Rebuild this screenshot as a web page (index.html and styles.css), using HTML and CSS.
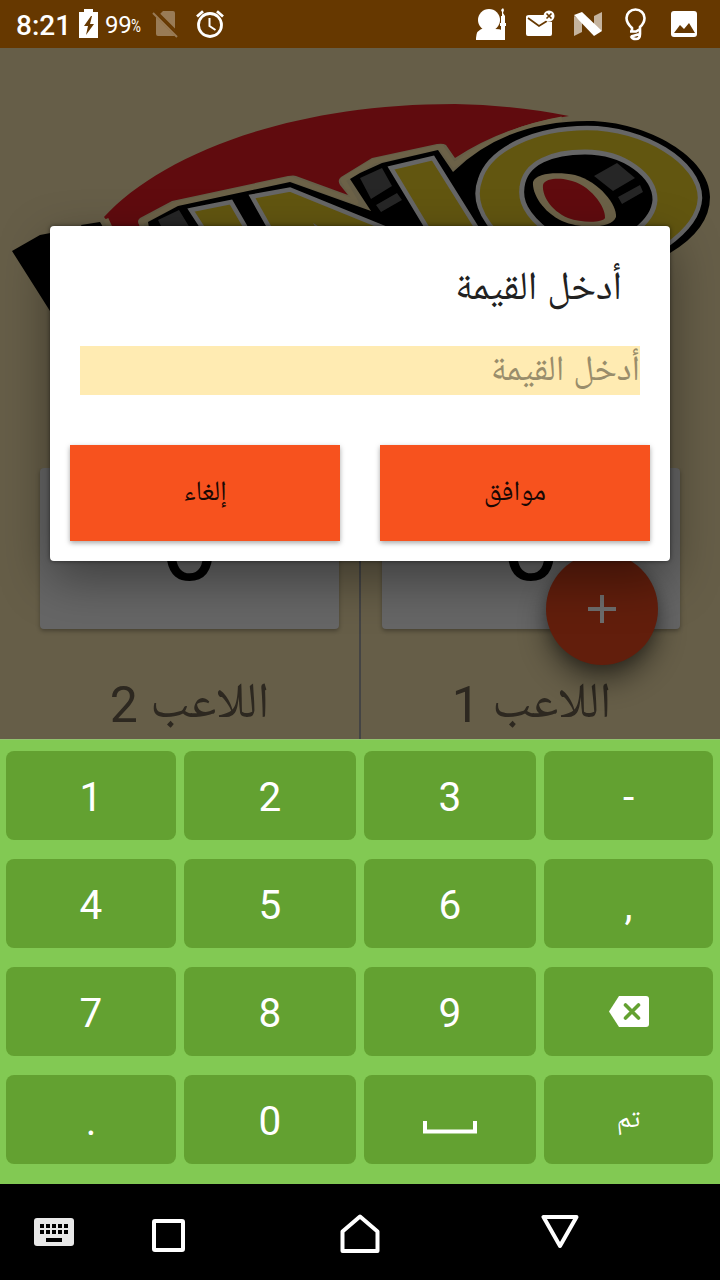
FILE: index.html
```html
<!DOCTYPE html>
<html lang="ar">
<head>
<meta charset="utf-8">
<title>UNO</title>
<link rel="stylesheet" href="styles.css">
</head>
<body>
<div class="phone">
  <header class="status">
    <span class="clock">8:21</span>
    <svg class="battery" width="20" height="30" viewBox="0 0 20 30"><path fill="#fff" d="M5 1h9v3h5v26H0V4h5z"/><path fill="#663800" d="M12 8 5 18h4l-2 9 8-11h-4l2-8z"/></svg>
    <span class="percent">99<small>%</small></span>
    <svg class="nosim" width="28" height="30" viewBox="0 0 28 30"><path fill="#997b56" d="M11 2h10q2 0 2 2v18L7 6zM4 8l19 19H6q-2 0-2-2z"/><path stroke="#663800" stroke-width="2" d="M3 1l24 24"/><path stroke="#997b56" stroke-width="2" d="M1 4l24 24"/></svg>
    <svg class="alarm" width="30" height="30" viewBox="0 0 30 30" fill="none" stroke="#fff" stroke-width="2.8"><circle cx="15" cy="16" r="11.500"/><path d="M2 7.500 8 2.300M28 7.500 22 2.300"/><path stroke-width="2" d="M14.500 9v8l6 4"/></svg>
    <span class="spacer"></span>
    <svg class="ic-mosque" width="32" height="33" viewBox="0 0 32 33" fill="#fff"><circle cx="13" cy="12" r="11"/><path d="M0 32v-2q0-8 8-10l5-2 6 3q5 0 6 1V18h-1v-3h1V8h1V4l-1-2 2-2 1 2-1 3 2 3v7h1v3h-1v14z"/></svg>
    <svg class="ic-mail" width="29" height="28" viewBox="0 0 29 28"><path fill="#fff" d="M3 5h15q0 7 8 7v12q0 2-2 2H2q-2 0-2-2V7q0-2 3-2z"/><path fill="none" stroke="#663800" stroke-width="1.800" d="M2 8l11 8 8-5"/><circle cx="23" cy="6" r="5.500" fill="#fff"/><path stroke="#663800" stroke-width="1.600" d="M20.500 3.500l5 5m0-5l-5 5"/></svg>
    <svg class="ic-n" width="28" height="25" viewBox="0 0 28 25"><path fill="#c5b39d" d="M0 4l8 5v11l-8 4zM20 4l8-4v19l-8-4z"/><path fill="#fff" d="M0 3l8-3 20 19-8 5z"/></svg>
    <svg class="ic-bulb" width="22" height="34" viewBox="0 0 22 34" fill="none" stroke="#fff" stroke-width="2.600"><path d="M7 22.500V20Q1.500 15 1.500 10A9 8.500 0 0 1 19.500 10Q19.500 15 15 19V26Q15 31 11 31Q7 31 6 28M5 23.500H11L15 21M6 28.500L15 26"/></svg>
    <svg class="ic-img" width="26" height="26" viewBox="0 0 26 26"><rect width="26" height="26" rx="3" fill="#fff"/><path fill="#663800" d="M3 22l6-8 4 4 5-6 6 10z"/></svg>
  </header>

  <main class="app">
    <svg class="logo" width="720" height="420" viewBox="0 48 720 420">
      <path fill="#600b0e" d="M104 217C158 158 282 104 455 104Q515 105 569 116Q505 125 455 158L446 145Q443 143 437 144L372 158L341 177Q337 180 340 185L348 195L296 176Q294 175 288 176L172 201L140 218Q136 221 140 226V232H116Z"/>
      <path fill="none" stroke="#6c6248" stroke-width="5" stroke-linejoin="round" d="M112 232L106 219M143 230L141 222L176 204L291 179L356 202L343 180L374 161L441 147L454 165Q500 130 562 119"/>
      <path d="M12 251L40 235L82 227L81 225L100 222L106 232V330H62ZM148 222L178 206L290 182L371 211L350 179L360 173L382 163L438 150L453 172Q505 121 588 121C648 121 710 158 710 197Q710 229 670 253V290H160Z"/>
      <g fill="#262626"><path d="M158 220l21-10 11 18h-28zM360 178l22-10 10 18-21 13zM376 205l21-12 5 7-21 12z"/></g>
      <g fill="#625610" stroke="#666" stroke-width="4.500"><path d="M191 210l40-8 26 45h-42zM252 196.500l38-7 118 48H275zM391 168l42-10 55 88h-50z"/><path d="M504 240C478 217 474 196 480 180C489 149 535 128 587 128C644 128 700 162 700 198Q699 222 667 245Z"/></g>
      <path fill="#000" stroke="#666" stroke-width="5" d="M548 232C525 214 520 200 522 187C525 162 553 152 585 152C625 152 655 176 655 200Q654 216 636 230Z"/>
      <path fill="#6c6248" d="M533 182C536 172 560 172 575 175C600 182 617 205 616 217C612 229 580 229 562 221C543 212 532 194 533 182Z"/>
      <path fill="#600b0e" d="M543 185C545 178 560 178 568 180C590 184 606 207 605 218C602 223 582 223 568 218C550 210 542 195 543 185Z"/>
      <path fill="#262626" d="M617 163l18 15-22 13-19-15zM640 185l3 7-21 12-4-7z"/>
      <path fill="#666" d="M313 223l8 5h-5z"/>
    </svg>
    <div class="players">
      <section class="player"><div class="score">0</div><div class="name" dir="rtl"><span class="ar">اللاعب</span> 2</div></section>
      <section class="player second"><div class="score">0</div><div class="name" dir="rtl"><span class="ar">اللاعب</span> 1</div></section>
    </div>
    <button class="fab" aria-label="+"><svg width="28" height="28"><path stroke="#6d6d6d" stroke-width="4" d="M14 0v28M0 14h28"/></svg></button>
    <div class="dialog" dir="rtl">
      <h1><span class="ar">أدخل القيمة</span></h1>
      <div class="field"><span class="ar">أدخل القيمة</span></div>
      <div class="actions"><button><span class="ar">موافق</span></button><button><span class="ar">إلغاء</span></button></div>
    </div>
  </main>

  <div class="keyboard">
    <div class="key">1</div><div class="key">2</div><div class="key">3</div><div class="key">-</div>
    <div class="key">4</div><div class="key">5</div><div class="key">6</div><div class="key">,</div>
    <div class="key">7</div><div class="key">8</div><div class="key">9</div>
    <div class="key"><svg width="40" height="31" viewBox="0 0 40 31"><path fill="#fff" d="M10 0h27q3 0 3 3v25q0 3-3 3H10L0 15.500z"/><path stroke="#63a131" stroke-width="3.600" stroke-linecap="round" d="M16.500 9l13 13m0-13l-13 13"/></svg></div>
    <div class="key">.</div><div class="key">0</div>
    <div class="key"><svg class="space" width="54" height="13"><path fill="none" stroke="#fff" stroke-width="4" d="M2 0v10.500h50V0"/></svg></div>
    <div class="key done"><span class="ar">تم</span></div>
  </div>

  <nav class="nav">
    <svg class="n-kb" width="40" height="28" viewBox="0 0 40 28"><rect width="40" height="28" rx="3" fill="#e8e8e8"/><path stroke="#000" stroke-width="4" stroke-dasharray="4 2" d="M6 8h28M6 14h28"/><path stroke="#000" stroke-width="4" d="M12 22h16"/></svg>
    <svg class="n-sq" width="34" height="34"><rect x="2" y="2" width="29" height="29" rx="1" fill="none" stroke="#fff" stroke-width="4"/></svg>
    <svg class="n-home" width="40" height="40"><path fill="none" stroke="#fff" stroke-width="4" stroke-linejoin="round" d="M2.500 17.500L20 2.500l17.500 15V37h-35z"/></svg>
    <svg class="n-back" width="38" height="36"><path fill="none" stroke="#fff" stroke-width="4" stroke-linejoin="round" d="M2.500 3h33L19 32z"/></svg>
  </nav>
</div>
</body>
</html>
```
FILE: styles.css
```css
* { box-sizing: border-box; }
body { margin: 0; font-family: Roboto, "Noto Naskh Arabic", "Noto Sans Arabic", "DejaVu Sans", sans-serif; }
button { border: 0; padding: 0; font: inherit; }
svg { display: block; flex: none; }
.phone { width: 720px; height: 1280px; display: flex; flex-direction: column; overflow: hidden; background: #000; }

.status { height: 48px; background: #663800; color: #fff; display: flex; align-items: flex-start; padding: 8px 23px 0 16px; }
.clock { font-size: 28px; line-height: 35px; font-weight: 500; width: 63px; }
.percent { font-size: 24px; line-height: 34px; font-weight: 400; margin-left: 6px; width: 47px; white-space: nowrap; letter-spacing: -.3px; }
.percent small { font-size: 18px; line-height: 20px; display: inline-block; transform: translateY(-1px) scaleX(.75); transform-origin: 0 50%; }
.nosim { margin-top: 1px; }
.alarm { margin: 1px 0 0 15px; }
.spacer { flex: 1; }
.ic-mail { margin: 2px 0 0 18px; }
.ic-n { margin: 4px 0 0 19px; }
.ic-bulb { margin-left: 23px; }
.ic-img { margin: 3px 0 0 24px; }

.app { height: 691px; position: relative; background: #665e48; display: flex; flex-direction: column; }
.players { display: flex; flex: 1; min-height: 0; overflow: hidden; }
.player { width: 360px; padding-left: 40px; }
.player.second { padding-left: 21px; border-left: 1px solid #444; }
.player:first-child { border-right: 1px solid #444; }
.score { width: 299px; height: 161px; border-radius: 4px; background: #666; box-shadow: 0 2px 4px rgba(0,0,0,.3); text-align: center; font-size: 104px; line-height: 153px; font-weight: 400; }
.player.second .score { width: 298px; }
.name { width: 299px; height: 70px; margin-top: 41px; font-size: 50px; line-height: 70px; text-align: center; color: #2d2820; white-space: nowrap; }
.name .ar { transform: translateY(-5px); }
.fab { position: absolute; left: 546px; top: 505px; width: 112px; height: 112px; border-radius: 50%; background: #621e0c; display: grid; place-items: center; box-shadow: 0 16px 28px rgba(0,0,0,.45), 0 4px 12px rgba(0,0,0,.2); }

.dialog { position: absolute; left: 50px; top: 178px; width: 620px; height: 334.500px; padding: 36px 20px 20px; border-radius: 4px; background: #fff; box-shadow: 0 18px 50px rgba(0,0,0,.4), 0 0 4px rgba(0,0,0,.5); }
.dialog h1 { margin: 0; padding: 0 28px; height: 84px; font-size: 39.800px; line-height: 48px; font-weight: 400; color: #212121; }
.field { height: 49px; margin: 0 10px 50px; background: #ffebb2; color: #998d6b; font-size: 35.600px; line-height: 45px; }
.actions { display: flex; gap: 40px; }
.actions button { width: 270px; height: 96px; background: #f7521e; color: #190804; font-size: 28px; box-shadow: 0 2px 5px rgba(0,0,0,.35); }
.actions .ar { transform: translateY(1px); }
.ar { display: inline-block; }

.keyboard { height: 445px; background: #82c953; border-top: 1px solid #91c36e; padding: 11px 7px 19px 6px; display: grid; grid-template-columns: 170px 172px 172px 169px; grid-template-rows: repeat(4, 89px); column-gap: 8px; row-gap: 19px; }
.key { border-radius: 8px; background: #63a131; color: #fff; font-size: 40.500px; display: grid; place-items: center; padding-top: 2px; }
.key svg { margin-top: -3px; }
.key .space { margin-top: 13px; }
.done { font-size: 27px; }

.nav { height: 96px; background: #000; display: flex; padding-left: 34px; }
.n-kb { margin-top: 34px; }
.n-sq { margin: 35px 0 0 78px; }
.n-home { margin: 30px 0 0 154px; }
.n-back { margin: 30px 0 0 161px; }
```
